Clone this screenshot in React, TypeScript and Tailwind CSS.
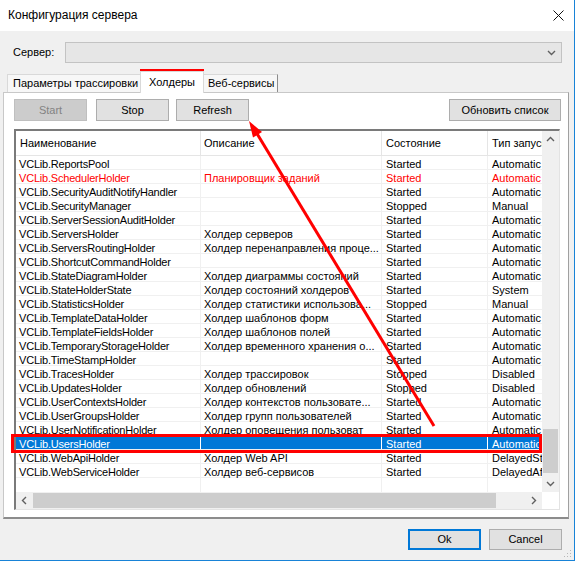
import React from "react";

type Row = [string, string, string, string];

const rows: Row[] = [
  ["VCLib.ReportsPool", "", "Started", "Automatic"],
  ["VCLib.SchedulerHolder", "Планировщик заданий", "Started", "Automatic"],
  ["VCLib.SecurityAuditNotifyHandler", "", "Started", "Automatic"],
  ["VCLib.SecurityManager", "", "Stopped", "Manual"],
  ["VCLib.ServerSessionAuditHolder", "", "Started", "Automatic"],
  ["VCLib.ServersHolder", "Холдер серверов", "Started", "Automatic"],
  ["VCLib.ServersRoutingHolder", "Холдер перенаправления проце...", "Started", "Automatic"],
  ["VCLib.ShortcutCommandHolder", "", "Started", "Automatic"],
  ["VCLib.StateDiagramHolder", "Холдер диаграммы состояний", "Started", "Automatic"],
  ["VCLib.StateHolderState", "Холдер состояний холдеров", "Started", "System"],
  ["VCLib.StatisticsHolder", "Холдер статистики использова...", "Stopped", "Manual"],
  ["VCLib.TemplateDataHolder", "Холдер шаблонов форм", "Started", "Automatic"],
  ["VCLib.TemplateFieldsHolder", "Холдер шаблонов полей", "Started", "Automatic"],
  ["VCLib.TemporaryStorageHolder", "Холдер временного хранения о...", "Started", "Automatic"],
  ["VCLib.TimeStampHolder", "", "Started", "Automatic"],
  ["VCLib.TracesHolder", "Холдер трассировок", "Stopped", "Disabled"],
  ["VCLib.UpdatesHolder", "Холдер обновлений", "Stopped", "Disabled"],
  ["VCLib.UserContextsHolder", "Холдер контекстов пользовате...", "Started", "Automatic"],
  ["VCLib.UserGroupsHolder", "Холдер групп пользователей", "Started", "Automatic"],
  ["VCLib.UserNotificationHolder", "Холдер оповещения пользоват", "Started", "Automatic"],
  ["VCLib.UsersHolder", "", "Started", "Automatic"],
  ["VCLib.WebApiHolder", "Холдер Web API", "Started", "DelayedStart"],
  ["VCLib.WebServiceHolder", "Холдер веб-сервисов", "Started", "DelayedAfterStart"],
];

function Chevron({ dir }: { dir: "up" | "down" | "left" | "right" }) {
  const pts =
    dir === "up"
      ? "1,6 4.5,2.5 8,6"
      : dir === "down"
      ? "1,3 4.5,6.5 8,3"
      : dir === "left"
      ? "6,1 2.5,4.5 6,8"
      : "3,1 6.5,4.5 3,8";
  return (
    <svg width="9" height="9" viewBox="0 0 9 9">
      <polyline points={pts} fill="none" stroke="#606060" strokeWidth="1.4" />
    </svg>
  );
}

function Btn({
  label,
  w,
  disabled,
  primary,
  className = "",
}: {
  label: string;
  w: string;
  disabled?: boolean;
  primary?: boolean;
  className?: string;
}) {
  const base = "flex items-center justify-center text-[11px] ";
  const look = disabled
    ? "bg-[#cccccc] border border-[#bfbfbf] text-[#838383]"
    : primary
    ? "bg-[#e1e1e1] border-2 border-[#0078d7] text-black"
    : "bg-[#e1e1e1] border border-[#adadad] text-black";
  return <div className={base + look + " " + w + " " + className}>{label}</div>;
}

export default function App() {
  return (
    <div className="relative w-[577px] h-[563px] bg-white overflow-hidden font-['Liberation_Sans',Arial,sans-serif] text-black">
      <div className="relative w-[575px] h-[561px] flex flex-col border-r border-b border-[#1883d7]">
        {/* Title bar */}
        <div className="h-[31px] bg-white flex items-center justify-between pl-[8px] pr-[10px] shrink-0">
          <span className="text-[12px] -mt-[1px]">Конфигурация сервера</span>
          <svg width="11" height="11" viewBox="0 0 11 11">
            <path d="M0.5 0.5 L10.5 10.5 M10.5 0.5 L0.5 10.5" stroke="#111" strokeWidth="1" />
          </svg>
        </div>

        {/* Body */}
        <div className="flex-1 bg-[#f0f0f0] flex flex-col">
          {/* Server row */}
          <div className="mt-[11px] h-[21px] flex items-center shrink-0">
            <div className="w-[65px] pl-[13px] text-[11px]">Сервер:</div>
            <div className="w-[497px] h-[21px] border border-[#c3c3c3] bg-[#e6e6e6] flex items-center justify-end pr-[5px]">
              <Chevron dir="down" />
            </div>
          </div>

          {/* Tabs */}
          <div className="mt-[8px] h-[21px] ml-[3px] flex items-end shrink-0 relative z-10">
            <div className="ml-[4px] w-[133px] h-[18px] border-l border-t border-[#d9d9d9] bg-[#f7f7f7] text-[11px] flex items-center pl-[5px]">
              Параметры трассировки
            </div>
            <div className="w-[64px] h-[22px] -mb-[1px] border-l border-t border-r border-[#d9d9d9] bg-white text-[11px] flex items-center justify-center pb-[1px]">
              Холдеры
            </div>
            <div className="w-[74px] h-[18px] border-t border-r border-t-[#d9d9d9] border-r-[#8c8c8c] bg-[#f7f7f7] text-[11px] flex items-center pl-[4px]">
              Веб-сервисы
            </div>
          </div>

          {/* Panel */}
          <div className="ml-[3px] w-[566px] h-[427px] bg-white border-l border-t border-[#c8c8c8] border-r border-r-[#a0a0a0] border-b-2 border-b-[#8c8c8c] flex flex-col pt-[6px] pl-[10px] shrink-0">
            <div className="h-[22px] flex shrink-0 w-[547px]">
              <Btn label="Start" w="w-[73px]" disabled />
              <Btn label="Stop" w="w-[73px]" className="ml-[9px]" />
              <Btn label="Refresh" w="w-[73px]" className="ml-[7px]" />
              <Btn label="Обновить список" w="w-[112px]" className="ml-auto" />
            </div>

            {/* List */}
            <div className="mt-[8px] w-[546px] h-[381px] border-l-2 border-t-2 border-r border-b border-l-[#7a7a7a] border-t-[#7a7a7a] border-r-[#e3e3e3] border-b-[#e3e3e3] flex flex-col shrink-0">
              <div className="h-[361px] flex">
                <div className="w-[526px] h-[361px] overflow-hidden flex flex-col">
                  {/* Header */}
                  <div className="h-[25px] flex border-b border-[#e5e5e5] text-[11px] shrink-0">
                    <div className="w-[185px] border-r border-[#e5e5e5] flex items-center pl-[4px] shrink-0">Наименование</div>
                    <div className="w-[181px] border-r border-[#e5e5e5] flex items-center pl-[3px] shrink-0">Описание</div>
                    <div className="w-[106px] border-r border-[#e5e5e5] flex items-center pl-[4px] shrink-0">Состояние</div>
                    <div className="flex-1 flex items-center pl-[4px] whitespace-nowrap overflow-hidden">Тип запуска</div>
                  </div>
                  {rows.map((r, i) => {
                    const selected = i === 20;
                    const red = i === 1;
                    const rowCls = selected
                      ? "bg-[#0078d7] text-white"
                      : red
                      ? "text-[#ff0000]"
                      : "text-black";
                    const sep = selected ? "border-white" : "border-[#f0f0f0]";
                    return (
                      <div
                        key={r[0]}
                        className={"h-[14px] flex border-b border-b-[#f0f0f0] text-[11px] leading-[13px] shrink-0 whitespace-nowrap " + rowCls}
                      >
                        <div className={"w-[185px] border-r pl-[3px] pt-[2px] tracking-[-0.2px] overflow-x-clip shrink-0 " + sep}>{r[0]}</div>
                        <div className={"w-[181px] border-r pl-[3px] pt-[2px] overflow-x-clip shrink-0 " + sep}>{r[1]}</div>
                        <div className={"w-[106px] border-r pl-[4px] pt-[2px] overflow-x-clip shrink-0 " + sep}>{r[2]}</div>
                        <div className="flex-1 pl-[4px] pt-[2px] overflow-x-clip">{r[3]}</div>
                      </div>
                    );
                  })}
                  <div className="h-[14px] flex shrink-0">
                    <div className="w-[185px] border-r border-[#f0f0f0] shrink-0" />
                    <div className="w-[181px] border-r border-[#f0f0f0] shrink-0" />
                    <div className="w-[106px] border-r border-[#f0f0f0] shrink-0" />
                    <div className="flex-1" />
                  </div>
                </div>
                {/* Vertical scrollbar */}
                <div className="w-[17px] h-[361px] bg-[#f0f0f0] flex flex-col">
                  <div className="h-[17px] flex items-center justify-center">
                    <Chevron dir="up" />
                  </div>
                  <div className="flex-1 flex flex-col">
                    <div className="h-[281px]" />
                    <div className="h-[44px] mx-[1px] bg-[#cdcdcd]" />
                  </div>
                  <div className="h-[17px] flex items-center justify-center">
                    <Chevron dir="down" />
                  </div>
                </div>
              </div>
              {/* Horizontal scrollbar */}
              <div className="h-[17px] flex">
                <div className="w-[526px] h-[17px] bg-[#f0f0f0] flex items-center">
                  <div className="w-[17px] h-[17px] flex items-center justify-center">
                    <Chevron dir="left" />
                  </div>
                  <div className="w-[463px] h-[15px] bg-[#cdcdcd]" />
                  <div className="flex-1" />
                  <div className="w-[17px] h-[17px] flex items-center justify-center">
                    <Chevron dir="right" />
                  </div>
                </div>
                <div className="w-[17px] h-[17px] bg-white" />
              </div>
            </div>
          </div>

          {/* Dialog buttons */}
          <div className="mt-[10px] flex justify-end pr-[12px] gap-[8px] shrink-0">
            <Btn label="Ok" w="w-[73px] h-[21px]" primary />
            <Btn label="Cancel" w="w-[73px] h-[21px]" />
          </div>
        </div>

        {/* Resize grip */}
        <svg className="absolute right-[2px] bottom-[2px]" width="10" height="10" viewBox="0 0 10 10">
          <g fill="#b8b8b8">
            <rect x="8" y="2" width="1" height="1" />
            <rect x="5" y="5" width="1" height="1" />
            <rect x="8" y="5" width="1" height="1" />
            <rect x="2" y="8" width="1" height="1" />
            <rect x="5" y="8" width="1" height="1" />
            <rect x="8" y="8" width="1" height="1" />
          </g>
        </svg>
      </div>

      {/* Red annotation: tab box */}
      <div className="absolute left-[140px] top-[69px] w-[64px] h-[23px] border-[3px] border-[#ff0000] pointer-events-none" />
      {/* Red annotation: row box */}
      <div className="absolute left-[11px] top-[434px] w-[531px] h-[19px] border-[3px] border-[#ff0000] pointer-events-none" />
      {/* Red arrow */}
      <svg className="absolute left-0 top-0 pointer-events-none" width="577" height="563" viewBox="0 0 577 563">
        <line x1="434" y1="426" x2="256" y2="132" stroke="#ff0000" strokeWidth="3" />
        <polygon points="249,121 262,132 253,137.5" fill="#ff0000" />
      </svg>
    </div>
  );
}
